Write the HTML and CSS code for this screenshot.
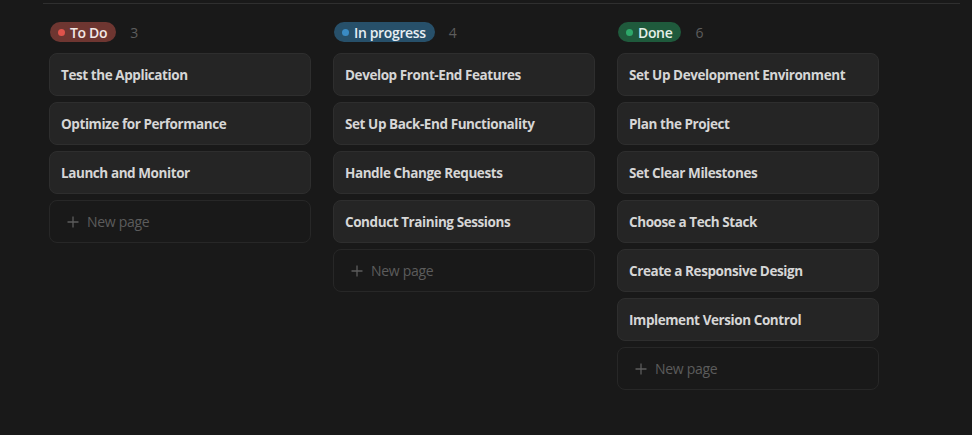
FILE: index.html
```html
<!DOCTYPE html>
<html>
<head>
<meta charset="utf-8">
<link rel="stylesheet" href="styles.css">
</head>
<body>
<div class="page">
  <div class="board">
    <div class="column">
      <div class="col-head">
        <span class="badge badge-red"><span class="dot"></span>To Do</span>
        <span class="count">3</span>
      </div>
      <div class="card">Test the Application</div>
      <div class="card">Optimize for Performance</div>
      <div class="card">Launch and Monitor</div>
      <div class="card new"><svg class="plus" width="12" height="12" viewBox="0 0 12 12"><path d="M6 0.5V11.5M0.5 6H11.5" stroke="currentColor" stroke-width="1.3"/></svg>New page</div>
    </div>
    <div class="column">
      <div class="col-head">
        <span class="badge badge-blue"><span class="dot"></span>In progress</span>
        <span class="count">4</span>
      </div>
      <div class="card">Develop Front-End Features</div>
      <div class="card">Set Up Back-End Functionality</div>
      <div class="card">Handle Change Requests</div>
      <div class="card">Conduct Training Sessions</div>
      <div class="card new"><svg class="plus" width="12" height="12" viewBox="0 0 12 12"><path d="M6 0.5V11.5M0.5 6H11.5" stroke="currentColor" stroke-width="1.3"/></svg>New page</div>
    </div>
    <div class="column">
      <div class="col-head">
        <span class="badge badge-green"><span class="dot"></span>Done</span>
        <span class="count">6</span>
      </div>
      <div class="card">Set Up Development Environment</div>
      <div class="card">Plan the Project</div>
      <div class="card">Set Clear Milestones</div>
      <div class="card">Choose a Tech Stack</div>
      <div class="card">Create a Responsive Design</div>
      <div class="card">Implement Version Control</div>
      <div class="card new"><svg class="plus" width="12" height="12" viewBox="0 0 12 12"><path d="M6 0.5V11.5M0.5 6H11.5" stroke="currentColor" stroke-width="1.3"/></svg>New page</div>
    </div>
  </div>
</div>
</body>
</html>
```
FILE: styles.css
```css
html, body {
  margin: 0;
  background: #191919;
  height: 100%;
}
body {
  font-family: "Open Sans", "Noto Sans", sans-serif;
  color: #d4d4d4;
}
.page {
  margin-top: 3px;
  margin-left: 43px;
  width: 917px;
  border-top: 1px solid #2f2f2f;
}
.board {
  display: flex;
  gap: 22px;
  padding-left: 6px;
  padding-top: 18px;
}
.column {
  width: 262px;
  display: flex;
  flex-direction: column;
  gap: 6px;
}
.col-head {
  display: flex;
  align-items: center;
  height: 20px;
  margin-bottom: 5px;
  padding-left: 1px;
}
.badge {
  display: inline-flex;
  align-items: center;
  height: 20px;
  padding: 0 9px 0 8px;
  border-radius: 10px;
  font-size: 14px;
  font-weight: 600;
  color: #f2e8e6;
  letter-spacing: -0.35px;
}
.badge .dot {
  width: 7px;
  height: 7px;
  border-radius: 50%;
  margin-right: 5px;
}
.badge-red { background: #6e3631; }
.badge-red .dot { background: #e0534b; }
.badge-blue { background: #27506a; color: #e6eef3; }
.badge-blue .dot { background: #3a8bc4; }
.badge-green { background: #1f5a3c; color: #e4efe8; }
.badge-green .dot { background: #2ea86a; }
.count {
  margin-left: 14px;
  font-size: 14px;
  color: #5d5d5d;
}
.card {
  box-sizing: border-box;
  height: 43px;
  display: flex;
  align-items: center;
  padding: 1px 11px 0;
  background: #252525;
  border: 1px solid #2e2e2e;
  border-radius: 8px;
  font-size: 13.5px;
  font-weight: 700;
  color: #d6d6d6;
  letter-spacing: -0.42px;
}
.card.new {
  background: transparent;
  border-color: #272727;
  font-weight: 400;
  color: #5c5c5c;
  padding: 0 11px 0 17px;
  font-size: 14px;
  letter-spacing: -0.3px;
}
.plus {
  margin-right: 8px;
  color: #5c5c5c;
}
```
